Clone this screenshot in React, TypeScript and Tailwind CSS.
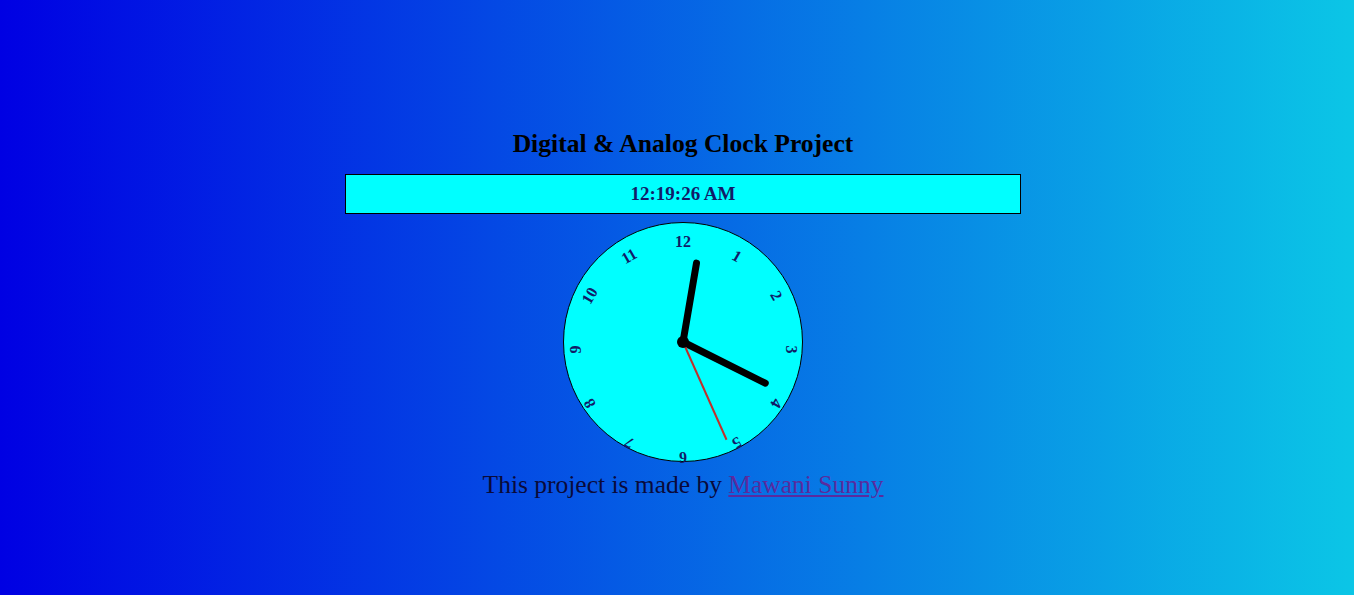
const numbers = [12, 1, 2, 3, 4, 5, 6, 7, 8, 9, 10, 11]

const rotations = [
  'rotate-[0deg]',
  'rotate-[30deg]',
  'rotate-[60deg]',
  'rotate-[90deg]',
  'rotate-[120deg]',
  'rotate-[150deg]',
  'rotate-[180deg]',
  'rotate-[210deg]',
  'rotate-[240deg]',
  'rotate-[270deg]',
  'rotate-[300deg]',
  'rotate-[330deg]',
]

// 12:19:26
const hourDeg = (12 % 12) * 30 + 19 * 0.5 + 26 * (0.5 / 60)
const minDeg = 19 * 6 + 26 * 0.1
const secDeg = 26 * 6

function Clock() {
  return (
    <div className="grid h-[240px] w-[240px] rounded-full border border-black bg-[#00ffff]">
      {numbers.map((n, i) => (
        <div
          key={n}
          className={`[grid-area:1/1] origin-[50%_126.5px] pt-[10px] text-center text-[16px] leading-[18px] font-bold text-[#111c68] ${rotations[i]}`}
        >
          {n}
        </div>
      ))}
      <svg className="[grid-area:1/1]" width="238" height="238" viewBox="-119 -119 238 238">
        <line x1="0" y1="0" x2="0" y2="-80" stroke="black" strokeWidth="7" strokeLinecap="round" transform={`rotate(${hourDeg})`} />
        <line x1="0" y1="0" x2="0" y2="-92" stroke="black" strokeWidth="7" strokeLinecap="round" transform={`rotate(${minDeg})`} />
        <line x1="0" y1="0" x2="0" y2="-107" stroke="#c0302b" strokeWidth="2" transform={`rotate(${secDeg})`} />
        <circle cx="0" cy="0" r="6" fill="black" />
      </svg>
    </div>
  )
}

export default function App() {
  return (
    <div className="flex min-h-[595px] flex-col items-center bg-[linear-gradient(to_right,#0000e3,#0bc6e6)] pt-[129px] pl-[12px] font-['Liberation_Serif',serif]">
      <h2 className="text-[25.6px] leading-[30px] font-bold text-black">Digital &amp; Analog Clock Project</h2>
      <div className="mt-[15px] flex h-10 w-[676px] items-center justify-center border border-black bg-[#00ffff] text-[19px] font-bold text-[#111c68]">
        12:19:26 AM
      </div>
      <div className="mt-2">
        <Clock />
      </div>
      <p className="mt-[8px] text-[25.5px] leading-[30px] text-[#0a0a3a]">
        This project is made by{' '}
        <a href="#" className="text-[#5b2a9e] underline">
          Mawani Sunny
        </a>
      </p>
    </div>
  )
}
